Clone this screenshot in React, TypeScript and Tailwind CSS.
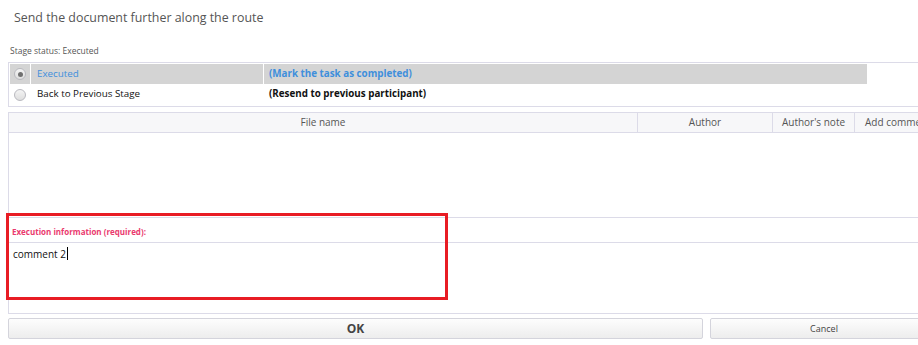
import React from "react";

function Radio({ checked }: { checked?: boolean }) {
  return (
    <div className="w-[12px] h-[12px] rounded-full border border-[#b9b9bf] bg-gradient-to-b from-[#f4f4f4] to-[#dedede] flex items-center justify-center">
      {checked && <div className="w-[5px] h-[5px] rounded-full bg-[#707070]" />}
    </div>
  );
}

export default function App() {
  return (
    <div
      className="relative w-[918px] h-[345px] bg-white overflow-hidden text-[#333]"
      style={{ fontFamily: "'Open Sans', 'Noto Sans', sans-serif" }}
    >
      {/* Title */}
      <div className="h-[36px] flex items-center pl-[14px] text-[12.4px] text-[#555] whitespace-nowrap">
        Send the document further along the route
      </div>

      {/* Stage status */}
      <div className="h-[26px] flex items-end pb-[6px] pl-[10px] text-[8.5px] leading-[11px] text-[#555] whitespace-nowrap">
        Stage status: Executed
      </div>

      {/* Radio table */}
      <div className="ml-[8px] w-[930px] border-y border-l border-[#dcdbe8] p-[1px]">
        <div className="flex h-[20px] gap-[1px] text-[9.8px] whitespace-nowrap">
          <div className="w-[20px] shrink-0 bg-[#d4d4d4] flex items-center justify-center">
            <Radio checked />
          </div>
          <div className="w-[232px] shrink-0 bg-[#d4d4d4] flex items-center pl-[6px] text-[#3f8fdc]">
            Executed
          </div>
          <div className="w-[603px] shrink-0 bg-[#d4d4d4] flex items-center pl-[5px] font-bold text-[#3f8fdc]">
            (Mark the task as completed)
          </div>
        </div>
        <div className="flex h-[21px] gap-[1px] text-[9.8px] whitespace-nowrap text-[#111]">
          <div className="w-[20px] shrink-0 flex items-center justify-center">
            <Radio />
          </div>
          <div className="w-[232px] shrink-0 flex items-center pl-[6px]">Back to Previous Stage</div>
          <div className="w-[603px] shrink-0 flex items-center pl-[5px] font-bold">
            (Resend to previous participant)
          </div>
        </div>
      </div>

      {/* Files + execution info */}
      <div className="mt-[5px] ml-[8px] w-[930px] border-y border-l border-[#dcdbe8]">
        <div className="flex h-[20px] bg-[#f7f7f9] border-b border-[#dcdbe8] text-[10px] text-[#555] whitespace-nowrap">
          <div className="w-[629px] shrink-0 border-r border-[#dcdbe8] flex items-center justify-center">
            File name
          </div>
          <div className="w-[135px] shrink-0 border-r border-[#dcdbe8] flex items-center justify-center">
            Author
          </div>
          <div className="w-[82px] shrink-0 border-r border-[#dcdbe8] flex items-center justify-center">
            Author's note
          </div>
          <div className="shrink-0 flex items-center pl-[10px]">Add comment</div>
        </div>
        <div className="h-[85px] border-b border-[#dcdbe8]" />
        <div className="h-[25px] border-b border-[#dcdbe8] flex items-center pt-[4px] pl-[3px] text-[8px] font-bold text-[#ea3a6e] whitespace-nowrap">
          Execution information (required):
        </div>
        <div className="h-[70px] pt-[5px] pl-[4px] text-[10px] leading-[12px] text-[#111] flex items-start">
          <span>comment 2</span>
          <span className="inline-block w-[1px] h-[13px] bg-black ml-[1px] -mt-[1px]" />
        </div>
      </div>

      {/* Buttons */}
      <div className="mt-[4px] ml-[8px] flex gap-[7px]">
        <button className="w-[695px] shrink-0 h-[21px] rounded-[2px] border border-[#d4d4dc] bg-gradient-to-b from-[#fdfdfd] to-[#ededed] text-[12px] font-bold text-[#444] leading-none">
          OK
        </button>
        <button className="w-[228px] shrink-0 h-[21px] rounded-[2px] border border-[#d4d4dc] bg-gradient-to-b from-[#fdfdfd] to-[#ededed] text-[9px] text-[#444] leading-none">
          Cancel
        </button>
      </div>

      {/* Red highlight annotation */}
      <div className="absolute left-[6px] top-[213px] w-[442px] h-[87px] border-[3px] border-[#e81c24] pointer-events-none" />
    </div>
  );
}
